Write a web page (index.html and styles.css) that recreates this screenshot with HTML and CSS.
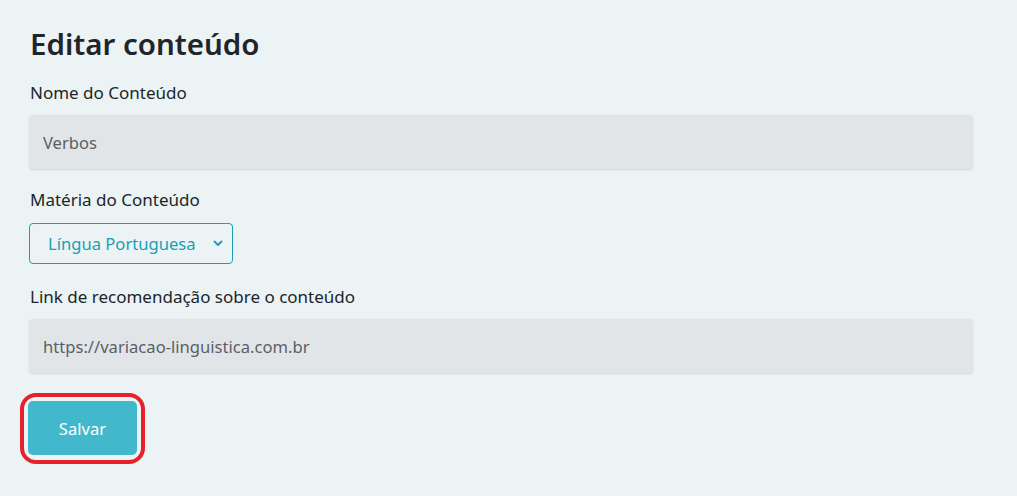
FILE: index.html
```html
<!DOCTYPE html>
<html lang="pt-BR">
<head>
<meta charset="utf-8">
<title>Editar conteúdo</title>
<link rel="stylesheet" href="styles.css">
</head>
<body>
<main class="page">
  <h1 class="title">Editar conteúdo</h1>
  <div class="field field-first">
    <label class="label">Nome do Conteúdo</label>
    <div class="input">Verbos</div>
  </div>
  <div class="field field-select">
    <label class="label label-select">Matéria do Conteúdo</label>
    <div class="select">
      <span>Língua Portuguesa</span>
      <svg class="chev" width="10" height="7" viewBox="0 0 10 7"><path d="M1.5 1.5 L5 5 L8.5 1.5" fill="none" stroke="#1a9fb5" stroke-width="1.8" stroke-linecap="round" stroke-linejoin="round"/></svg>
    </div>
  </div>
  <div class="field field-link">
    <label class="label">Link de recomendação sobre o conteúdo</label>
    <div class="input">https://variacao-linguistica.com.br</div>
  </div>
  <div class="actions">
    <div class="highlight">
      <button class="btn">Salvar</button>
    </div>
  </div>
</main>
</body>
</html>
```
FILE: styles.css
```css
html, body {
  margin: 0;
  padding: 0;
  background: #ebf3f5;
}
body {
  font-family: "Noto Sans", "Open Sans", sans-serif;
  color: #212529;
  width: 1017px;
  height: 496px;
  overflow: hidden;
}
.page {
  padding: 22px 44px 0 29px;
  display: flex;
  flex-direction: column;
}
.title {
  margin: 0 0 0 1px;
  font-size: 29.5px;
  font-weight: 600;
  line-height: 44px;
  color: #212529;
}
.field {
  display: flex;
  flex-direction: column;
  align-items: flex-start;
}
.field-first { margin-top: 15px; }
.field-select { margin-top: 19px; }
.field-link { margin-top: 21px; }
.label {
  font-size: 17px;
  line-height: 24px;
  margin-left: 1px;
  margin-bottom: 10px;
  color: #212529;
}
.label-select { margin-bottom: 11px; }
.input {
  align-self: stretch;
  height: 54px;
  box-sizing: border-box;
  background: #e2e5e8;
  border-radius: 4px;
  box-shadow: 0 1px 2px rgba(0,0,0,0.12);
  padding: 0 14px;
  display: flex;
  align-items: center;
  font-size: 16.6px;
  color: #5a5f64;
}
.select {
  width: 204px;
  height: 41px;
  box-sizing: border-box;
  border: 1px solid #1a9fb5;
  border-radius: 4px;
  display: flex;
  align-items: center;
  justify-content: space-between;
  padding: 0 9px 0 18px;
  color: #1a9fb5;
  font-size: 16.6px;
}
.chev { display: block; }
.actions {
  margin-top: 20px;
  margin-left: -9px;
}
.highlight {
  display: inline-block;
  border: 4px solid #e8202a;
  border-radius: 16px;
  padding: 4px 4px 5px 4px;
}
.btn {
  display: block;
  width: 109px;
  height: 54px;
  border: none;
  border-radius: 5px;
  background: #42b8cc;
  color: #ffffff;
  font-family: inherit;
  font-size: 16.6px;
  padding: 0;
}
```
